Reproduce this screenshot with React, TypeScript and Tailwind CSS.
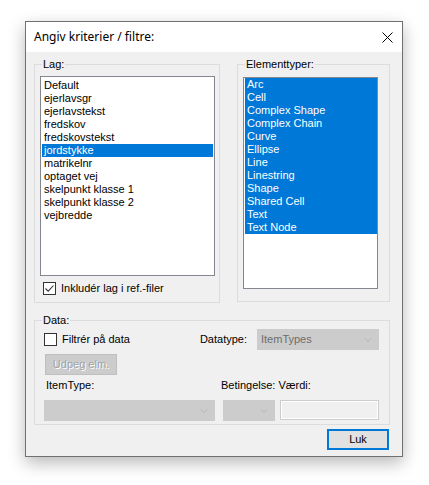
import { ChevronDown } from 'lucide-react';

const LAG = [
  'Default',
  'ejerlavsgr',
  'ejerlavstekst',
  'fredskov',
  'fredskovstekst',
  'jordstykke',
  'matrikelnr',
  'optaget vej',
  'skelpunkt klasse 1',
  'skelpunkt klasse 2',
  'vejbredde',
];

const TYPER = [
  'Arc',
  'Cell',
  'Complex Shape',
  'Complex Chain',
  'Curve',
  'Ellipse',
  'Line',
  'Linestring',
  'Shape',
  'Shared Cell',
  'Text',
  'Text Node',
];

function GroupBox({ label, className, children }: { label: string; className: string; children: React.ReactNode }) {
  return (
    <div className={`relative border border-[#dcdcdc] ${className}`}>
      <span className="absolute left-[7px] top-[-7px] bg-[#f0f0f0] px-[1px] leading-[13px]">{label}</span>
      {children}
    </div>
  );
}

function CheckBox({ checked, label }: { checked: boolean; label: string }) {
  return (
    <label className="flex items-center gap-[5px] leading-[13px]">
      <span className="flex h-[13px] w-[13px] items-center justify-center border border-[#333333] bg-white">
        {checked && (
          <svg width="11" height="11" viewBox="0 0 11 11">
            <path d="M1.5 5.5 L4.2 8.2 L9.5 2.5" fill="none" stroke="#333333" strokeWidth="1.1" />
          </svg>
        )}
      </span>
      <span>{label}</span>
    </label>
  );
}

function DisabledSelect({ className, value }: { className: string; value?: string }) {
  return (
    <div className={`flex h-[21px] items-center justify-between border border-[#cccccc] bg-[#cccccc] pl-[3px] pr-[4px] text-[#6d6d6d] ${className}`}>
      <span>{value}</span>
      <ChevronDown className="h-[12px] w-[12px] text-[#a6a6a6]" strokeWidth={1.2} />
    </div>
  );
}

export default function App() {
  return (
    <div className="min-h-[485px] bg-white pl-[25px] pt-[21px] font-['Liberation_Sans',Arial,sans-serif] text-[11px] text-black">
      <div className="flex h-[436px] w-[378px] flex-col border border-[#707070] bg-[#f0f0f0] shadow-[0_6px_16px_rgba(0,0,0,0.28)]">
        {/* Titellinje */}
        <div className="flex h-[30px] shrink-0 items-center justify-between bg-white pl-[8px] pr-[9px]">
          <span className="font-['Segoe_UI','Noto_Sans',sans-serif] text-[12px] text-black">Angiv kriterier / filtre:</span>
          <svg width="11" height="11" viewBox="0 0 11 11" className="mt-[1px]">
            <path d="M0.5 0.5 L10.5 10.5 M10.5 0.5 L0.5 10.5" stroke="#000" strokeWidth="1" />
          </svg>
        </div>

        <div className="flex flex-col pl-[8px] pt-[12px]">
          <div className="flex gap-[17px]">
            <GroupBox label="Lag:" className="h-[239px] w-[186px] pl-[5px] pt-[11px]">
              <ul className="h-[200px] w-[175px] border border-[#828790] bg-white px-[1px] pt-[2px]">
                {LAG.map((n) => (
                  <li
                    key={n}
                    className={`h-[13px] pl-[2px] leading-[13px] ${n === 'jordstykke' ? 'bg-[#0078d7] text-white' : ''}`}
                  >
                    {n}
                  </li>
                ))}
              </ul>
              <div className="ml-[3px] mt-[6px]">
                <CheckBox checked label="Inkludér lag i ref.-filer" />
              </div>
            </GroupBox>

            <GroupBox label="Elementtyper:" className="h-[238px] w-[153px] pl-[5px] pt-[12px]">
              <ul className="h-[212px] w-[135px] border border-[#828790] bg-white pl-[1px]">
                {TYPER.map((n) => (
                  <li key={n} className="h-[13px] bg-[#0078d7] pl-[2px] leading-[13px] text-white">
                    {n}
                  </li>
                ))}
              </ul>
            </GroupBox>
          </div>

          <GroupBox label="Data:" className="mt-[17px] h-[105px] w-[356px] pl-[9px] pr-[10px] pt-[8px]">
            <div className="flex h-[21px] items-center">
              <CheckBox checked={false} label="Filtrér på data" />
              <span className="ml-auto mr-[10px]">Datatype:</span>
              <DisabledSelect className="w-[122px]" value="ItemTypes" />
            </div>
            <div className="ml-[1px] mt-[4px] flex h-[21px] w-[72px] items-center justify-center border border-[#bfbfbf] bg-[#cccccc] text-[#a3a3a3] [text-shadow:1px_1px_0_#ffffff]">
              Udpeg elm.
            </div>
            <div className="mt-[4px] flex h-[13px] leading-[13px] text-[#000000]">
              <span className="ml-[2px] w-[175px]">ItemType:</span>
              <span>Betingelse:</span>
              <span className="ml-[3px]">Værdi:</span>
            </div>
            <div className="mt-[8px] flex">
              <DisabledSelect className="w-[171px]" />
              <DisabledSelect className="ml-[8px] w-[52px]" />
              <div className="ml-[5px] h-[20px] w-[99px] border border-[#cccccc] bg-[#f0f0f0] shadow-[inset_0_0_0_1px_#ffffff]" />
            </div>
          </GroupBox>

          <div className="mt-[4px] flex w-[355px] justify-end">
            <button className="flex h-[21px] w-[62px] items-center justify-center border-2 border-[#0078d7] bg-[#e1e1e1] text-black">
              Luk
            </button>
          </div>
        </div>
      </div>
    </div>
  );
}
